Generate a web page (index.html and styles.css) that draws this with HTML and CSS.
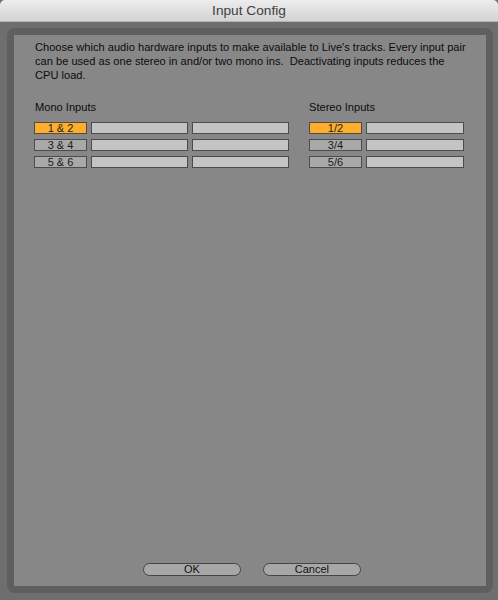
FILE: index.html
```html
<!DOCTYPE html>
<html>
<head>
<meta charset="utf-8">
<title>Input Config</title>
<link rel="stylesheet" href="styles.css">
</head>
<body>
<div class="window">
  <div class="titlebar">Input Config</div>
  <div class="frame">
    <div class="bezel">
      <div class="panel">
        <p class="intro">Choose which audio hardware inputs to make available to Live's tracks. Every input pair<br>can be used as one stereo in and/or two mono ins.&nbsp; Deactivating inputs reduces the<br>CPU load.</p>
        <div class="columns">
          <div class="group mono">
            <div class="group-label">Mono Inputs</div>
            <div class="row">
              <div class="cell key on">1 &amp; 2</div>
              <div class="cell slot"></div>
              <div class="cell slot"></div>
            </div>
            <div class="row">
              <div class="cell key">3 &amp; 4</div>
              <div class="cell slot"></div>
              <div class="cell slot"></div>
            </div>
            <div class="row">
              <div class="cell key">5 &amp; 6</div>
              <div class="cell slot"></div>
              <div class="cell slot"></div>
            </div>
          </div>
          <div class="group stereo">
            <div class="group-label">Stereo Inputs</div>
            <div class="row">
              <div class="cell key on">1/2</div>
              <div class="cell slot wide"></div>
            </div>
            <div class="row">
              <div class="cell key">3/4</div>
              <div class="cell slot wide"></div>
            </div>
            <div class="row">
              <div class="cell key">5/6</div>
              <div class="cell slot wide"></div>
            </div>
          </div>
        </div>
        <div class="actions">
          <div class="pill">OK</div>
          <div class="pill">Cancel</div>
        </div>
      </div>
    </div>
  </div>
</div>
</body>
</html>
```

FILE: styles.css
```css
html, body {
  margin: 0;
  padding: 0;
  background: #6f6f6f;
}
body {
  width: 498px;
  height: 600px;
  overflow: hidden;
  font-family: "Liberation Sans", Arial, sans-serif;
}
.window {
  width: 498px;
  height: 600px;
  display: flex;
  flex-direction: column;
  background: #6e6e6e;
}
.titlebar {
  height: 21px;
  line-height: 22px;
  text-align: center;
  font-family: "Liberation Sans", Arial, sans-serif;
  font-size: 13.7px;
  color: #3f3f3f;
  background: linear-gradient(#ededed, #d3d3d3);
  border-bottom: 1px solid #b4b4b4;
  border-radius: 5px 5px 0 0;
}
.frame {
  flex: 1;
  padding: 6px 7px 7px 7px;
  display: flex;
}
.bezel {
  flex: 1;
  background: #5f5f5f;
  border-radius: 8px;
  padding: 7px 7px 7px 7px;
  display: flex;
}
.panel {
  flex: 1;
  min-width: 0;
  background: #878787;
  display: flex;
  flex-direction: column;
  padding: 5px 20px 10px 20px;
}
.intro {
  margin: 0;
  font-size: 11.1px;
  line-height: 14px;
  color: #0c0c10;
  padding-left: 1px;
  white-space: nowrap;
}
.columns {
  display: flex;
  gap: 20px;
  margin-top: 18px;
}
.group-label {
  font-size: 11.1px;
  line-height: 14px;
  color: #0c0c10;
  padding-left: 1px;
  margin-bottom: 8px;
}
.stereo .group-label {
  padding-left: 0;
}
.row {
  display: flex;
  gap: 4px;
  margin-bottom: 5px;
}
.cell {
  box-sizing: border-box;
  height: 12px;
  border: 1px solid #4c4c4c;
  font-size: 11px;
  line-height: 10px;
  text-align: center;
  color: #1a1a1a;
}
.key {
  width: 53px;
  background: #a9a9a9;
}
.key.on {
  background: #ffae2c;
}
.slot {
  width: 97px;
  background: #c4c4c4;
}
.slot.wide {
  width: 98px;
}
.actions {
  margin-top: auto;
  display: flex;
  justify-content: center;
  gap: 22px;
  padding-left: 4px;
}
.pill {
  box-sizing: border-box;
  width: 98px;
  height: 13px;
  border: 1px solid #454545;
  border-radius: 7px;
  background: #a7a7a7;
  font-size: 11px;
  line-height: 11px;
  text-align: center;
  color: #111;
}
```
